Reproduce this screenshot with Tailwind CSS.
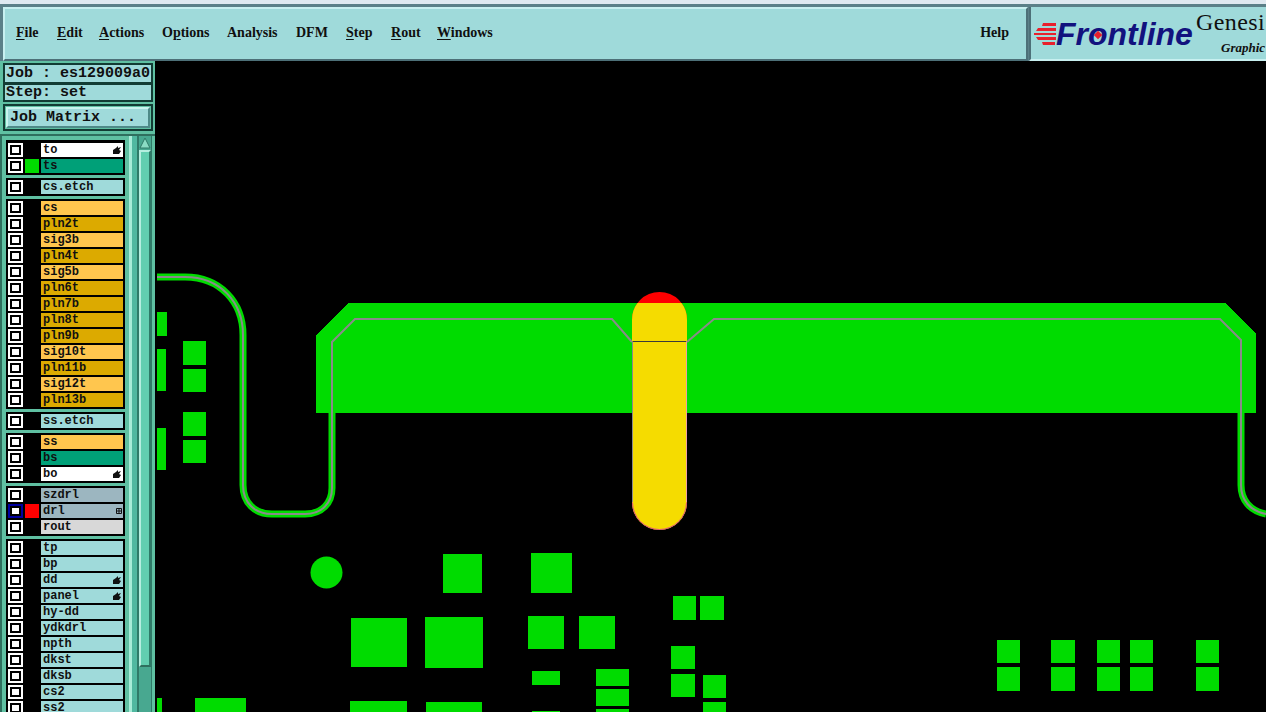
<!DOCTYPE html>
<html lang="en">
<head>
  <meta charset="UTF-8">
  <title>Genesis 2000 - Graphic Editor</title>
  <script src="https://cdn.jsdelivr.net/npm/@tailwindcss/browser@4"></script>
</head>
<body class="w-[1266px] h-[712px] overflow-hidden bg-black font-['Liberation_Serif',serif]">
  <!-- Window title edge -->
  <div class="h-[4px] bg-[#dfe9f0]"></div>
  <div class="h-[3px] bg-[#5b8088]"></div>

  <!-- Menu bar + logo -->
  <header class="flex h-[54px] bg-[#5b8088]">
    <nav class="w-[1025px] ml-[3px] flex items-center pl-[11px] pr-[17px] pb-[4px] bg-[#9fdada] border-t-2 border-l-2 border-t-[#c8f0f0] border-l-[#c8f0f0] border-r-2 border-b-2 border-r-[#4d7078] border-b-[#4d7078] text-[14px] font-bold text-[#101010]">
      <a class="w-[41px]"><span class="underline underline-offset-2">F</span>ile</a>
      <a class="w-[42px]"><span class="underline underline-offset-2">E</span>dit</a>
      <a class="w-[63px]"><span class="underline underline-offset-2">A</span>ctions</a>
      <a class="w-[65px]">O<span class="underline underline-offset-2">p</span>tions</a>
      <a class="w-[69px]">Analysis</a>
      <a class="w-[50px]">DFM</a>
      <a class="w-[45px]"><span class="underline underline-offset-2">S</span>tep</a>
      <a class="w-[46px]"><span class="underline underline-offset-2">R</span>out</a>
      <a><span class="underline underline-offset-2">W</span>indows</a>
      <a class="ml-auto">Help</a>
    </nav>
    <div class="flex-1 ml-[1px] bg-[#9fdada] border-l-2 border-l-[#4d7078] border-b-2 border-b-[#c8f0f0] relative overflow-hidden whitespace-nowrap">
      <div class="flex items-center h-full pl-[3px] pt-[1px]">
        <svg class="w-[22px] h-[22px] shrink-0" viewBox="0 0 22 22">
          <path d="M9 0h13v3H8zM4 5h18v3H2zM0 10h22v2H0zM2 14h20v3H4zM8 19h13v3H9z" fill="#e8202c"/>
        </svg>
        <div class="text-[32px] leading-none font-bold italic text-[#12127e] font-['Liberation_Sans',sans-serif]">Fr<span class="relative">o<span class="absolute left-[7px] top-[16px] w-[6px] h-[6px] rotate-45 bg-[#e8202c]"></span></span>ntline</div>
      </div>
      <div class="absolute left-[165px] top-[-3px] text-[24px] text-[#101010] tracking-[0.4px]">Genesi</div>
      <div class="absolute left-[190px] top-[31px] text-[13px] italic font-bold text-[#101010]">Graphic</div>
    </div>
  </header>

  <div class="flex h-[651px]">
    <!-- Left panel -->
    <aside class="w-[155px] shrink-0 bg-[#5fc0a2] overflow-hidden font-['Liberation_Mono',monospace] font-bold text-[#101010]">
      <div class="pt-[2px] pl-[3px] pr-[2px]">
        <div class="h-[21px] border-2 border-[#123c34] bg-[#9fdada] text-[15px] leading-[17px] pl-[1px] whitespace-nowrap">Job : es129009a0</div>
        <div class="h-[19px] -mt-[1px] border-2 border-[#123c34] bg-[#9fdada] text-[15px] leading-[15px] pl-[1px]">Step: set</div>
        <div class="mt-[2px] h-[27px] border-2 border-[#123c34] bg-[#5fc0a2] p-[1px]">
          <div class="h-[21px] border-2 border-t-[#c8f5ee] border-l-[#c8f5ee] border-r-[#4e8a88] border-b-[#4e8a88] bg-[#9fdada] text-[15px] leading-[17px] pl-[2px] whitespace-nowrap">Job Matrix ...</div>
        </div>
      </div>

      <div class="mt-[3px] h-[580px] flex border-t-2 border-t-[#2f6f5e] border-l-2 border-l-[#2f6f5e]">
        <div id="layers" class="w-[123px] shrink-0 pl-[4px] pt-[4px] flex flex-col gap-[3px]"></div>
        <div class="w-[4px] bg-[#5fc0a2]"></div>
        <div class="w-[3px] bg-[#a8ecd8]"></div>
        <div class="w-[5px] bg-[#50b8a0]"></div>
        <div class="w-[2px] bg-[#2f7a68]"></div>
        <!-- Scrollbar -->
        <div class="w-[12px] bg-[#48a890] flex flex-col pt-[1px]">
          <svg class="w-[12px] h-[12px] shrink-0" viewBox="0 0 12 12"><path d="M6 1 11 11H1z" fill="#8adcc4" stroke="#2f7a68"/></svg>
          <div class="h-[517px] mt-[1px] bg-[#62ceb0] border-l-2 border-r-2 border-t-2 border-b-2 border-l-[#b6eee0] border-t-[#b6eee0] border-r-[#2f7a68] border-b-[#2f6f5e]"></div>
        </div>
        <div class="w-[1px] bg-[#2f7a68]"></div>
        <div class="w-[3px] bg-[#5fc0a2]"></div>
      </div>
    </aside>

    <!-- Board canvas -->
    <svg class="flex-1 h-full bg-black" viewBox="155 61 1111 651" shape-rendering="crispEdges">
      <g fill="#00dc00">
        <path d="M349 303H1225L1256 334V413H316V335Z"/>
        <circle cx="326.500" cy="572.500" r="16" shape-rendering="geometricPrecision"/>
        <path d="M157 312h10v24h-10zM157 349h9v42h-9zM157 428h9v42h-9zM183 341h23v24h-23zM183 369h23v23h-23zM183 412h23v24h-23zM183 440h23v23h-23zM157 698h5v14h-5zM195 698h51v14h-51z"/>
        <path d="M443 554h39v39h-39zM531 553h41v40h-41zM351 618h56v49h-56zM425 617h58v51h-58zM528 616h36v33h-36zM579 616h36v33h-36zM350 701h57v11h-57zM426 702h56v10h-56z"/>
        <path d="M532 671h28v14h-28zM532 711h28v1h-28zM596 669h33v17h-33zM596 689h33v17h-33zM596 709h33v3h-33z"/>
        <path d="M673 596h23v24h-23zM700 596h24v24h-24zM671 646h24v23h-24zM671 674h24v23h-24zM703 675h23v23h-23zM703 702h23v10h-23z"/>
        <path d="M997 640h23v23h-23zM997 667h23v24h-23zM1051 640h24v23h-24zM1051 667h24v24h-24zM1097 640h23v23h-23zM1097 667h23v24h-23zM1130 640h23v23h-23zM1130 667h23v24h-23zM1196 640h23v23h-23zM1196 667h23v24h-23z"/>
      </g>
      <g fill="none" shape-rendering="geometricPrecision">
        <path d="M157 277H185C220 277 243 302 243 335V485C243 503 255 514 272 514H305C322 514 332 503 332 488V413" stroke="#00dc00" stroke-width="7"/>
        <path d="M1241 413V485C1241 500 1250 511 1266 514" stroke="#00dc00" stroke-width="7"/>
        <path d="M157 277H185C220 277 243 302 243 335V485C243 503 255 514 272 514H305C322 514 332 503 332 488V342L355 319H612L632 342M687 342L714 319H1220L1241 340V485C1241 500 1250 511 1266 514" stroke="#8a8a8a" stroke-width="2"/>
      </g>
      <g shape-rendering="geometricPrecision">
        <circle cx="659.500" cy="319.500" r="27.500" fill="#ff0000"/>
        <path d="M637.500 303H681.500A27.500 27.500 0 0 1 687 319.500V502.500a27.500 27.500 0 0 1-55 0V319.500A27.500 27.500 0 0 1 637.500 303Z" fill="#f5dc00"/>
        <path d="M632.500 341.500H686.500" stroke="#3a3a3a" stroke-width="1" fill="none"/>
        <path d="M632.500 341.500V502" stroke="#8a8a8a" stroke-width="1" fill="none"/>
        <path d="M686.500 341.500V502" stroke="#f0a0a0" stroke-width="1" fill="none"/>
        <path d="M632.500 502.500a27 27 0 0 0 54 0" stroke="#e05080" stroke-width="1" fill="none"/>
      </g>
    </svg>
  </div>

  <script>
    const ROW_COLORS = {
      white: "bg-white",
      teal: "bg-[#00a078]",
      cyan: "bg-[#9fdada]",
      orange: "bg-[#ffc64e]",
      gold: "bg-[#dcaa00]",
      slate: "bg-[#9cb6c0]",
      gray: "bg-[#d8d8d8]"
    };

    const HAND = `<svg class="absolute right-[2px] top-[3px] w-[8px] h-[8px]" viewBox="0 0 8 8"><path d="M0 8V4L3 2 5 0V2L8 1 6 4 8 5 6 8Z" fill="#111"/></svg>`;
    const GRID = `<svg class="absolute right-[1px] top-[4px] w-[6px] h-[6px]" viewBox="0 0 6 6"><path d="M.5.5h5v5h-5zM3 0v6M0 3h6" fill="none" stroke="#111"/></svg>`;

    const groups = [
      [["to", "white", HAND], ["ts", "teal", "", "green"]],
      [["cs.etch", "cyan"]],
      [["cs", "orange"], ["pln2t", "gold"], ["sig3b", "orange"], ["pln4t", "gold"], ["sig5b", "orange"], ["pln6t", "gold"], ["pln7b", "gold"], ["pln8t", "gold"], ["pln9b", "gold"], ["sig10t", "orange"], ["pln11b", "gold"], ["sig12t", "orange"], ["pln13b", "gold"]],
      [["ss.etch", "cyan"]],
      [["ss", "orange"], ["bs", "teal"], ["bo", "white", HAND]],
      [["szdrl", "slate"], ["drl", "slate", GRID, "red"], ["rout", "gray"]],
      [["tp", "cyan"], ["bp", "cyan"], ["dd", "cyan", HAND], ["panel", "cyan", HAND], ["hy-dd", "cyan"], ["ydkdrl", "cyan"], ["npth", "cyan"], ["dkst", "cyan"], ["dksb", "cyan"], ["cs2", "cyan"], ["ss2", "cyan"]]
    ];

    function rowHtml([name, color, icon = "", mark = ""]) {
      const swatch = mark === "green" ? "bg-[#00dc00]" : mark === "red" ? "bg-[#ff0000]" : "bg-black";
      const box = mark === "red" ? "border-[#0000a0]" : "border-white";
      return `
        <div class="flex h-[14px] gap-[2px]">
          <div class="w-[15px] h-[14px] bg-black border-2 ${box}"><div class="w-[7px] h-[6px] m-[2px] bg-white"></div></div>
          <div class="w-[14px] ${swatch}"></div>
          <div class="relative w-[82px] ${ROW_COLORS[color]} text-[12px] leading-[14px] pl-[2px] text-[#101010]">${name}${icon}</div>
        </div>`;
    }

    document.getElementById("layers").innerHTML = groups.map((g, i) => `
      <div class="w-[119px] shrink-0 bg-black ${i === 0 ? "pt-[3px]" : "pt-[2px]"} pb-[2px] px-[2px] flex flex-col gap-[2px]">${g.map(rowHtml).join("")}</div>
    `).join("");
  </script>
</body>
</html>
